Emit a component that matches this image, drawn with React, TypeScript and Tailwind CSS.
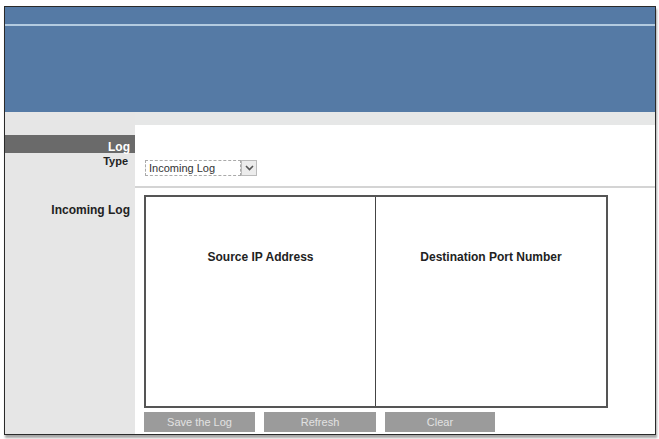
export default function App() {
  const font = { fontFamily: '"Liberation Sans", Arial, sans-serif' }
  return (
    <div className="min-h-screen bg-white pl-[4px] pt-[6px]" style={font}>
      <div className="w-[652px] h-[429px] border border-[#2a2a2a] flex flex-col shadow-[1px_3px_2px_rgba(0,0,0,0.35)] overflow-hidden">
        {/* Header */}
        <div className="h-[105px] bg-[#557aa5] pt-[17px]">
          <div className="h-[2px] bg-[#b3cbe0]" />
        </div>

        {/* Body */}
        <div className="flex flex-1">
          {/* Labels */}
          <div className="w-[130px] bg-[#e6e6e6] flex flex-col pt-[23px] text-right">
            <div className="h-[18px] bg-[#6a6a6a] text-white font-bold text-[12px] leading-[18px] pr-[5px] pt-[3px]">
              Log
            </div>
            <div className="text-[11px] font-bold text-[#222] leading-[14px] pr-[7px] pt-[1px]">Type</div>
            <div className="text-[12px] font-bold text-[#222] leading-[14px] pr-[5px] mt-[35px]">
              Incoming Log
            </div>
          </div>

          {/* Content */}
          <div className="flex-1 flex flex-col bg-white">
            <div className="h-[13px] bg-[#e6e7e7]" />
            <div className="flex items-center pl-[10px] mt-[35px] h-[16px]">
              <div className="w-[96px] h-[16px] border border-dashed border-[#aaa] bg-white text-[11px] text-[#333] leading-[14px] pl-[3px]">
                Incoming Log
              </div>
              <div className="w-[16px] h-[16px] border border-[#bbb] bg-[#ececec] flex items-center justify-center">
                <svg width="9" height="6" viewBox="0 0 9 6">
                  <path d="M1 1l3.5 3.5L8 1" stroke="#555" strokeWidth="1.6" fill="none" />
                </svg>
              </div>
            </div>
            <div className="h-[2px] bg-[#d4d4d4] mt-[10px]" />

            {/* Log table */}
            <div className="ml-[9px] mt-[7px] w-[464px] h-[213px] border-2 border-[#555] grid grid-cols-2">
              <div className="border-r-[1.5px] border-[#444] flex justify-center pt-[51px]">
                <span className="text-[12px] font-bold text-[#222]">Source IP Address</span>
              </div>
              <div className="flex justify-center pt-[51px]">
                <span className="text-[12px] font-bold text-[#222]">Destination Port Number</span>
              </div>
            </div>

            {/* Buttons */}
            <div className="flex gap-[9px] ml-[9px] mt-[4px]">
              <div className="w-[111px] h-[20px] bg-[#9b9b9b] text-[#e2e2e2] text-[11px] leading-[20px] text-center">
                Save the Log
              </div>
              <div className="w-[112px] h-[20px] bg-[#9b9b9b] text-[#e2e2e2] text-[11px] leading-[20px] text-center">
                Refresh
              </div>
              <div className="w-[110px] h-[20px] bg-[#9b9b9b] text-[#e2e2e2] text-[11px] leading-[20px] text-center">
                Clear
              </div>
            </div>
          </div>
        </div>
      </div>
    </div>
  )
}
